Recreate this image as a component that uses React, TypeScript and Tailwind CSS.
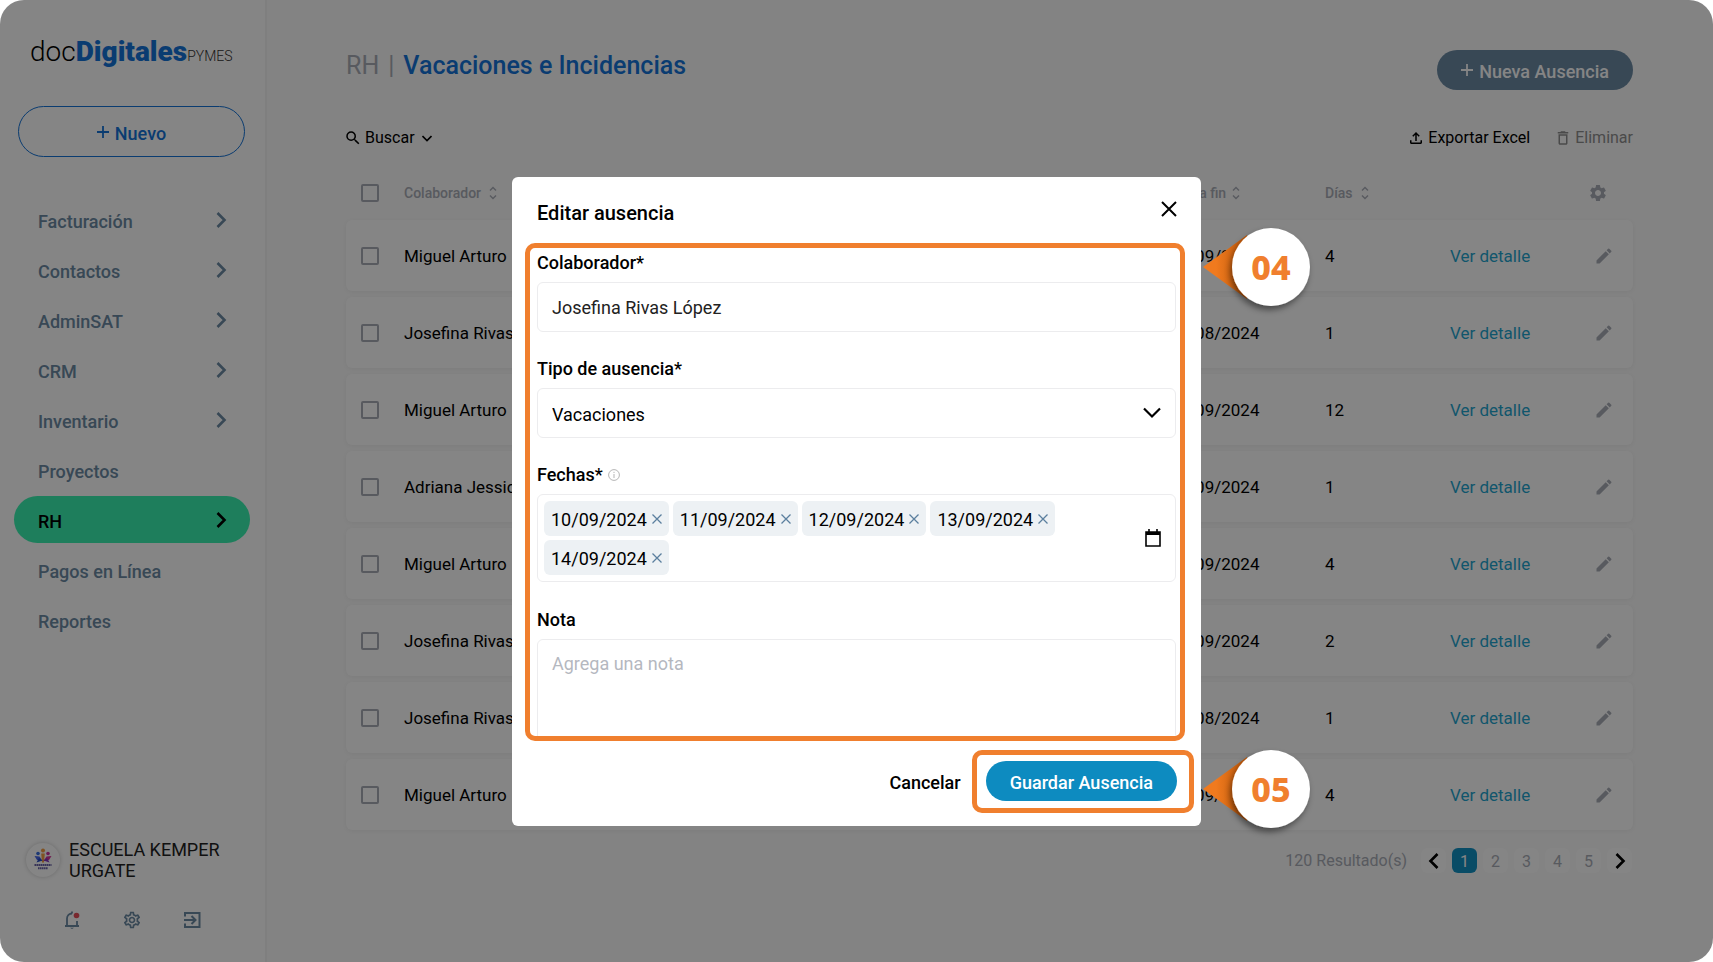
import React, { useState } from 'react';
import {
  MdSearch,
  MdOutlineFileUpload,
  MdDeleteOutline,
  MdSettings,
  MdOutlineSettings,
  MdEdit,
} from 'react-icons/md';

type Absence = { name: string; type: string; start: string; end: string; days: number };

const navItems = [
  { label: 'Facturación', expandable: true },
  { label: 'Contactos', expandable: true },
  { label: 'AdminSAT', expandable: true },
  { label: 'CRM', expandable: true },
  { label: 'Inventario', expandable: true },
  { label: 'Proyectos', expandable: false },
  { label: 'RH', expandable: true, active: true },
  { label: 'Pagos en Línea', expandable: false },
  { label: 'Reportes', expandable: false },
];

const absences: Absence[] = [
  { name: 'Miguel Arturo', type: 'Vacaciones', start: '10/09/2024', end: '13/09/2024', days: 4 },
  { name: 'Josefina Rivas López', type: 'Vacaciones', start: '12/08/2024', end: '12/08/2024', days: 1 },
  { name: 'Miguel Arturo', type: 'Vacaciones', start: '02/09/2024', end: '13/09/2024', days: 12 },
  { name: 'Adriana Jessica', type: 'Vacaciones', start: '05/09/2024', end: '05/09/2024', days: 1 },
  { name: 'Miguel Arturo', type: 'Vacaciones', start: '10/09/2024', end: '13/09/2024', days: 4 },
  { name: 'Josefina Rivas López', type: 'Vacaciones', start: '05/09/2024', end: '06/09/2024', days: 2 },
  { name: 'Josefina Rivas López', type: 'Vacaciones', start: '12/08/2024', end: '12/08/2024', days: 1 },
  { name: 'Miguel Arturo', type: 'Vacaciones', start: '10/09/2024', end: '13/09/2024', days: 4 },
];

const initialDates = ['10/09/2024', '11/09/2024', '12/09/2024', '13/09/2024', '14/09/2024'];

function Chevron({ className, d = 'M3.500 2l7 7-7 7' }: { className?: string; d?: string }) {
  return (
    <svg viewBox="0 0 14 18" className={className} fill="none" stroke="currentColor" strokeWidth="2.600" aria-hidden="true">
      <path d={d} />
    </svg>
  );
}

function Plus({ className }: { className?: string }) {
  return (
    <svg viewBox="0 0 12 12" className={className} stroke="currentColor" strokeWidth="1.800" aria-hidden="true">
      <path d="M6 0v12M0 6h12" />
    </svg>
  );
}

function SortIcon() {
  return (
    <svg viewBox="0 0 8 14" className="h-3.5 w-2 shrink-0" fill="none" stroke="currentColor" strokeWidth="1.400" aria-hidden="true">
      <path d="M1 4.500l3-3 3 3M1 9.500l3 3 3-3" />
    </svg>
  );
}

function SchoolLogo() {
  return (
    <svg viewBox="0 0 34 34" className="size-[34px]" aria-hidden="true">
      <circle cx="17" cy="7.500" r="2" fill="#f59e42" />
      <path d="M15.200 10.500h3.600l-.8 9h-2z" fill="#f59e42" />
      <circle cx="12" cy="10.500" r="1.800" fill="#3b6fe0" />
      <circle cx="22" cy="10.500" r="1.800" fill="#c9359d" />
      <path d="M8.500 13l5 .5 3 4.500-5.500-1z" fill="#4666e8" />
      <path d="M25.500 13l-5 .5-3 4.500 5.500-1z" fill="#d4359a" />
      <path d="M10.500 19.500l6-2-3.500-2.500z" fill="#274bc4" />
      <path d="M23.500 19.500l-6-2 3.500-2.500z" fill="#8334bd" />
      <path d="M8.500 22h17M12 25.300h10" stroke="#6a63a8" strokeWidth="2" strokeDasharray="1.600 .4" />
    </svg>
  );
}

function Callout({ label, className }: { label: string; className: string }) {
  return (
    <div className={`absolute ml-0.5 h-20 w-[108px] ${className}`}>
      <svg viewBox="0 0 108 80" className="absolute inset-0 size-full overflow-visible" aria-hidden="true">
        <defs>
          <linearGradient id={`tail-${label}`} x1="0" x2="1" y1="0" y2="0">
            <stop offset="0.3" stopColor="#f07a1e" />
            <stop offset="1" stopColor="#b95508" />
          </linearGradient>
          <filter id={`shade-${label}`} x="-20%" y="-20%" width="140%" height="150%">
            <feDropShadow dx="-2" dy="4" stdDeviation="3" floodColor="#000" floodOpacity="0.45" />
          </filter>
        </defs>
        <path d="M0 40L44 8v64z" fill={`url(#tail-${label})`} />
        <circle cx="68" cy="40" r="39" fill="#fff" filter={`url(#shade-${label})`} />
      </svg>
      <span className="absolute inset-y-0 right-px flex w-[78px] items-center justify-center font-['Noto_Sans',sans-serif] text-[34px] font-extrabold text-[#f07f2e]">
        {label}
      </span>
    </div>
  );
}

function Sidebar() {
  return (
    <aside className="flex w-[267px] shrink-0 flex-col border-r-2 border-[#f3f3f3] bg-white pt-8">
      <a href="#" className="flex items-baseline pl-[30px] leading-10">
        <span className="text-[28px] font-light text-black">doc</span>
        <span className="text-[28px] font-black text-[#1473d8]">Digitales</span>
        <span className="text-[14px] font-light text-[#333]">PYMES</span>
      </a>

      <button className="mt-[30px] mr-5 ml-[18px] flex h-[51px] items-center justify-center gap-1.5 rounded-full border border-[#1473d8] text-[18px] font-medium text-[#1473d8]">
        <Plus className="size-3" />
        <span className="pt-[3px]">Nuevo</span>
      </button>

      <nav className="mt-[39px] mr-[15px] ml-3.5 flex flex-col gap-[3px]">
        {navItems.map((item) => (
          <a
            key={item.label}
            href="#"
            className={`flex h-[47px] items-center justify-between rounded-full pr-[22px] pl-6 text-[18px] font-medium ${
              item.active ? 'bg-[#3af2b0] text-black' : 'text-[#6b8aa4]'
            }`}
          >
            <span className="pt-[3px]">{item.label}</span>
            {item.expandable && <Chevron className="h-[18px] w-3.5" />}
          </a>
        ))}
      </nav>

      <div className="mt-auto pb-8">
        <div className="flex items-center gap-[9px] pl-[26px]">
          <span className="rounded-full shadow-[0_0_4px_rgba(0,0,0,0.2)]">
            <SchoolLogo />
          </span>
          <p className="w-[160px] text-[18px] leading-[21px] text-[#222]">ESCUELA KEMPER URGATE</p>
        </div>
        <div className="mt-[29px] flex gap-10 pl-[62px] text-[#6b8aa4]">
          <button aria-label="Notificaciones">
            <svg viewBox="0 0 20 20" className="size-5" fill="none" stroke="currentColor" strokeWidth="1.800">
              <path d="M3 16h14M5 16V8.500a5 5 0 0 1 5-5M15 11v5M10 1.500v2" />
              <path d="M8 17.800h4L10 19z" fill="currentColor" stroke="none" />
              <circle cx="14.500" cy="5.500" r="2.800" fill="#e8505b" stroke="none" />
            </svg>
          </button>
          <button aria-label="Configuración">
            <MdOutlineSettings className="size-5" />
          </button>
          <button aria-label="Salir">
            <svg viewBox="0 0 20 20" className="size-5" fill="none" stroke="currentColor" strokeWidth="2">
              <path d="M3 6.500V3h14.500v14H3v-3.500M2 10h11M9.500 6l4 4-4 4" />
            </svg>
          </button>
        </div>
      </div>
    </aside>
  );
}

function AbsenceTable() {
  const sortable = 'flex items-center gap-2';
  const heading = 'p-0 font-medium';
  const cell = 'p-0 pt-[3px]';
  return (
    <table className="mt-4 w-full table-fixed border-separate border-spacing-x-0 border-spacing-y-[6px] text-left text-[17px] text-black">
      <colgroup>
        <col className="w-[58px]" />
        <col />
        <col className="w-[210px]" />
        <col className="w-[175px]" />
        <col className="w-[156px]" />
        <col className="w-[125px]" />
        <col className="w-[133px]" />
        <col className="w-[50px]" />
      </colgroup>
      <thead className="text-[14px] text-[#a9adb7]">
        <tr className="h-[42px]">
          <th className="p-0 pl-[15px]">
            <input
              type="checkbox"
              aria-label="Seleccionar todo"
              className="block size-[18px] appearance-none rounded-[2px] border-2 border-[#a9adb7]"
            />
          </th>
          <th className={heading}><span className={sortable}>Colaborador <SortIcon /></span></th>
          <th className={heading}><span className={sortable}>Tipo <SortIcon /></span></th>
          <th className={heading}><span className={sortable}>Fecha inicio <SortIcon /></span></th>
          <th className={heading}><span className="flex items-center gap-1.5">Fecha fin <SortIcon /></span></th>
          <th className={heading}><span className={sortable}>Días <SortIcon /></span></th>
          <th aria-label="Detalle" />
          <th className="p-0 pl-[5px]">
            <button aria-label="Configurar columnas" className="block">
              <MdSettings className="size-5" />
            </button>
          </th>
        </tr>
      </thead>
      <tbody>
        {absences.map((row, index) => (
          <tr key={index} className="h-[71px] rounded-md bg-white shadow-[0_1px_4px_rgba(0,0,0,0.05)]">
            <td className="rounded-l-md p-0 pl-[15px]">
              <input
                type="checkbox"
                aria-label={`Seleccionar ${row.name}`}
                className="block size-[18px] appearance-none rounded-[2px] border-2 border-[#a9adb7]"
              />
            </td>
            <td className={`${cell} whitespace-nowrap`}>{row.name}</td>
            <td className={cell}>{row.type}</td>
            <td className={cell}>{row.start}</td>
            <td className={cell}>{row.end}</td>
            <td className={cell}>{row.days}</td>
            <td className={cell}>
              <a href="#" className="text-[#1fa5d0]">Ver detalle</a>
            </td>
            <td className="rounded-r-md p-0 pl-[11px]">
              <button aria-label={`Editar ${row.name}`} className="block">
                <MdEdit className="size-5 text-[#a9adb7]" />
              </button>
            </td>
          </tr>
        ))}
      </tbody>
    </table>
  );
}

function Pagination() {
  const cell = 'flex size-[25px] items-center justify-center rounded-md';
  return (
    <div className="mt-3 mr-px flex items-center justify-end gap-1.5 text-[16px] text-[#a9adb7]">
      <span className="mr-2">120 Resultado(s)</span>
      <button aria-label="Anterior" className={`${cell} bg-white text-black`}>
        <Chevron className="h-[18px] w-3.5" d="M10.500 2l-7 7 7 7" />
      </button>
      {[1, 2, 3, 4, 5].map((page) => (
        <button key={page} className={`${cell} pt-0.5 ${page === 1 ? 'bg-[#1392c4] text-white' : 'bg-white'}`}>
          {page}
        </button>
      ))}
      <button aria-label="Siguiente" className={`${cell} bg-white text-black`}>
        <Chevron className="h-[18px] w-3.5" />
      </button>
    </div>
  );
}

function EditDialog() {
  const [dates, setDates] = useState(initialDates);
  const label = 'block pt-px text-[18px] leading-6 font-medium text-black';
  const box = 'mt-[7px] w-full rounded-md border border-[#ececee] bg-white';
  return (
    <div className="absolute inset-0 flex items-start justify-center bg-black/48 pt-[177px]">
      <div role="dialog" aria-label="Editar ausencia" className="relative w-[689px] rounded-md bg-white pb-[13px]">
        <header className="flex h-[66px] items-center justify-between pt-1.5 pr-6 pl-[25px]">
          <h2 className="text-[20px] font-medium text-black">Editar ausencia</h2>
          <button aria-label="Cerrar" className="-mt-2">
            <svg viewBox="0 0 16 16" className="size-4" stroke="#000" strokeWidth="2">
              <path d="M1 1l14 14M15 1L1 15" />
            </svg>
          </button>
        </header>

        <div className="mr-4 ml-[13px] h-[498px] overflow-hidden rounded-[10px] border-[5px] border-[#f07f2e] pt-0.5 pr-1 pl-[7px]">
          <label htmlFor="employee" className={label}>Colaborador*</label>
          <input id="employee" defaultValue="Josefina Rivas López" className={`${box} block h-[50px] px-3.5 text-[18px] text-[#222]`} />

          <label htmlFor="kind" className={`${label} mt-6`}>Tipo de ausencia*</label>
          <div className="relative">
            <select id="kind" className={`${box} block h-[50px] appearance-none px-3.5 pt-0.5 text-[18px] text-black`}>
              <option>Vacaciones</option>
            </select>
            <svg viewBox="0 0 18 12" className="pointer-events-none absolute right-[15px] bottom-[19px] h-3 w-[18px]" fill="none" stroke="#000" strokeWidth="2.200" aria-hidden="true">
              <path d="M1 1.500l8 8 8-8" />
            </svg>
          </div>

          <div className="mt-6 flex items-center gap-[5px]">
            <span className={label}>Fechas*</span>
            <svg viewBox="0 0 12 12" className="size-3" fill="none" stroke="#b5b5b5" aria-hidden="true">
              <circle cx="6" cy="6" r="5.400" />
              <path d="M6 5v4M6 2.800v1.200" />
            </svg>
          </div>
          <div className={`${box} flex items-center p-1.5 pr-3.5`}>
            <ul className="flex flex-1 flex-wrap gap-1">
              {dates.map((date) => (
                <li key={date} className="flex h-[35px] items-center gap-[5px] rounded-md bg-[#edf1f4] px-[7px] text-[18px] text-black">
                  <span className="pt-0.5">{date}</span>
                  <button aria-label={`Quitar ${date}`} onClick={() => setDates(dates.filter((d) => d !== date))}>
                    <svg viewBox="0 0 10 10" className="size-2.5" stroke="#5b7f9e" strokeWidth="1.300">
                      <path d="M.5.5l9 9M9.500.5l-9 9" />
                    </svg>
                  </button>
                </li>
              ))}
            </ul>
            <button aria-label="Abrir calendario">
              <svg viewBox="0 0 16 18" className="h-[18px] w-4" fill="none" stroke="#000" strokeWidth="1.600">
                <path d="M1 3h14v14H1zM4 0v3M12 0v3" />
                <path d="M1 4.500h14" strokeWidth="3" />
              </svg>
            </button>
          </div>

          <label htmlFor="note" className={`${label} mt-[25px]`}>Nota</label>
          <textarea
            id="note"
            placeholder="Agrega una nota"
            className={`${box} block h-[130px] resize-none px-3.5 py-3 text-[18px] leading-6 placeholder:text-[#b5b8bf]`}
          />
        </div>

        <footer className="mt-[9px] mr-[7px] flex items-center justify-end gap-[11px]">
          <button className="pt-0.5 text-[18px] font-medium text-black">Cancelar</button>
          <div className="rounded-[10px] border-[5px] border-[#f07f2e] pt-1.5 pr-3 pb-[7px] pl-[9px]">
            <button className="block h-10 rounded-full bg-[#0d8bc0] px-6 pt-0.5 text-[18px] font-medium text-white">Guardar Ausencia</button>
          </div>
        </footer>

        <Callout label="04" className="top-[50px] left-full" />
        <Callout label="05" className="top-[572px] left-full" />
      </div>
    </div>
  );
}

export default function App() {
  return (
    <div className="relative flex min-h-screen overflow-hidden rounded-[24px] bg-[#fbfbfb] font-['Roboto',sans-serif]">
      <Sidebar />
      <main className="min-w-0 flex-1 pt-[50px] pr-20 pl-[79px]">
        <div className="flex items-start justify-between">
          <h1 className="flex gap-[9px] text-[25px] leading-8 font-medium text-[#1473d8]">
            <span className="font-normal text-[#a9adb7]">RH</span>
            <span className="font-normal text-[#a9adb7]">|</span>
            Vacaciones e Incidencias
          </h1>
          <button className="flex h-10 items-center gap-1.5 rounded-full bg-[#6b8aa4] px-6 text-[18px] font-medium text-white">
            <Plus className="size-3" />
            <span className="pt-[3px]">Nueva Ausencia</span>
          </button>
        </div>

        <div className="mt-9 flex items-center gap-6 text-[16px] text-black">
          <button className="mr-auto -ml-0.5 flex items-center gap-[3px]">
            <MdSearch className="size-[18px]" />
            Buscar
            <svg viewBox="0 0 10 7" className="ml-1 h-[7px] w-2.5" fill="none" stroke="currentColor" strokeWidth="1.600" aria-hidden="true">
              <path d="M.5 1l4.500 4.500L9.500 1" />
            </svg>
          </button>
          <button className="flex items-center gap-[3px]">
            <MdOutlineFileUpload className="size-[18px]" />
            Exportar Excel
          </button>
          <button className="flex items-center gap-[3px] text-[#8f8f8f]">
            <MdDeleteOutline className="size-[18px]" />
            Eliminar
          </button>
        </div>

        <AbsenceTable />
        <Pagination />
      </main>
      <EditDialog />
    </div>
  );
}
